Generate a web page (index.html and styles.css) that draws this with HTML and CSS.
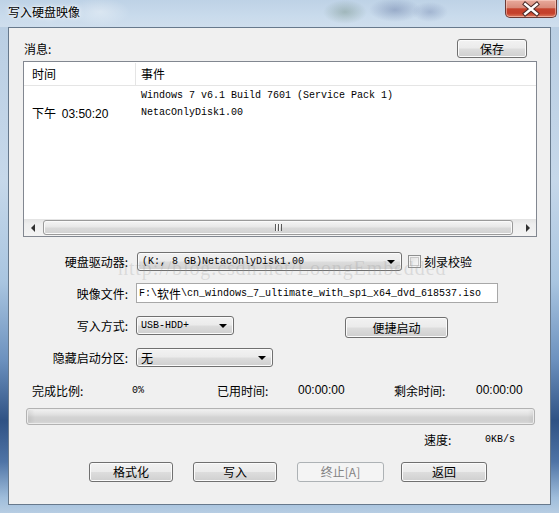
FILE: index.html
```html
<!DOCTYPE html>
<html>
<head>
<meta charset="UTF-8">
<title>写入硬盘映像</title>
<link rel="stylesheet" href="styles.css">
</head>
<body>
<div class="window">
  <div class="titlebar">
    <span class="title">写入硬盘映像</span>
    <div class="close">
      <svg width="52" height="18" viewBox="0 0 52 18">
        <path d="M20 4 L32 14 M32 4 L20 14" stroke="#4a2b28" stroke-width="4.6" stroke-linecap="square" fill="none"/>
        <path d="M20 4 L32 14 M32 4 L20 14" stroke="#ffffff" stroke-width="2.6" stroke-linecap="square" fill="none"/>
      </svg>
    </div>
  </div>

  <div class="client">
    <div class="msg-head">
      <span>消息:</span>
      <div class="btn save">保存</div>
    </div>

    <div class="listview">
      <div class="lv-header">
        <div class="c1">时间</div>
        <div class="c2">事件</div>
      </div>
      <div class="lv-body">
        <div class="lv-row">
          <div class="c1"></div>
          <div class="c2 mono">Windows 7 v6.1 Build 7601 (Service Pack 1)</div>
        </div>
        <div class="lv-row">
          <div class="c1">下午 <span class="num">03:50:20</span></div>
          <div class="c2 mono">NetacOnlyDisk1.00</div>
        </div>
      </div>
      <div class="hscroll">
        <div class="arrow-btn"><span class="tri-left"></span></div>
        <div class="thumb"><span class="grip"></span></div>
        <div class="arrow-btn"><span class="tri-right"></span></div>
      </div>
    </div>

    <div class="row r1">
      <span class="lbl">硬盘驱动器:</span>
      <div class="combo drive"><span class="mono">(K:, 8 GB)NetacOnlyDisk1.00</span><span class="tri-down"></span></div>
      <span class="check"></span>
      <span class="check-text">刻录校验</span>
    </div>

    <div class="row r2">
      <span class="lbl">映像文件:</span>
      <div class="textbox mono">F:\<span class="cjk">软件</span>\cn_windows_7_ultimate_with_sp1_x64_dvd_618537.iso</div>
    </div>

    <div class="row r3">
      <span class="lbl">写入方式:</span>
      <div class="combo mode"><span class="mono">USB-HDD+</span><span class="tri-down"></span></div>
      <div class="btn quick">便捷启动</div>
    </div>

    <div class="row r4">
      <span class="lbl">隐藏启动分区:</span>
      <div class="combo hidden"><span>无</span><span class="tri-down"></span></div>
    </div>

    <div class="stats">
      <span class="st-lbl w1">完成比例:</span>
      <span class="st-val w2 mono">0%</span>
      <span class="st-lbl w3">已用时间:</span>
      <span class="st-val w4 num">00:00:00</span>
      <span class="st-lbl w5">剩余时间:</span>
      <span class="st-val num">00:00:00</span>
    </div>

    <div class="progress"></div>

    <div class="speed">
      <span class="sp-lbl">速度:</span>
      <span class="mono">0KB/s</span>
    </div>

    <div class="buttons">
      <div class="btn b1">格式化</div>
      <div class="btn b2">写入</div>
      <div class="btn b3 disabled">终止[A]</div>
      <div class="btn b4">返回</div>
    </div>
  </div>

  <div class="watermark">http://blog.csdn.net/LoongEmbedded</div>
</div>
</body>
</html>
```

FILE: styles.css
```css
body {
  margin: 0;
  font-family: "Noto Sans CJK SC", "Liberation Sans", sans-serif;
  font-size: 12px;
  color: #000;
}

.window {
  position: relative;
  width: 559px;
  height: 513px;
  display: flex;
  flex-direction: column;
  overflow: hidden;
  background:
    linear-gradient(to bottom, #b8cde2 0%, #c6d8ea 35%, #a9c5e0 55%, #6d92bf 70%, #2f5284 82%, #4f74a6 90%, #9fbddb 97%, #b7cde3 100%);
}

/* title bar */
.titlebar {
  height: 27px;
  display: flex;
  justify-content: space-between;
  align-items: flex-start;
  background:
    radial-gradient(ellipse 22px 12px at 345px 12px, rgba(90,120,100,0.35), rgba(90,120,100,0)),
    radial-gradient(ellipse 26px 12px at 395px 10px, rgba(70,90,140,0.35), rgba(70,90,140,0)),
    radial-gradient(ellipse 18px 10px at 430px 12px, rgba(80,100,150,0.3), rgba(80,100,150,0)),
    radial-gradient(ellipse 30px 14px at 100px 12px, rgba(255,255,255,0.35), rgba(255,255,255,0)),
    linear-gradient(to bottom, #bed2e6 0%, #c9dbec 60%, #cfdeed 100%);
}

.title {
  padding: 5px 0 0 8px;
  font-size: 12px;
  line-height: 14px;
  text-shadow: 0 0 6px #fff, 0 0 3px #fff;
}

.close {
  width: 52px;
  height: 18px;
  margin-right: 2px;
  box-sizing: border-box;
  border: 1px solid #6b3a35;
  border-top: none;
  border-radius: 0 0 5px 5px;
  background: linear-gradient(to bottom, #e8aa9c 0%, #d98b7a 45%, #c5432d 52%, #c4402b 78%, #de7a5e 100%);
  box-shadow: inset 0 0 0 1px rgba(255,220,210,0.5);
  display: flex;
}

/* client area */
.client {
  flex: 1;
  margin: 0 8px 8px 8px;
  background: #f0f0f0;
  border: 1px solid #67798c;
  padding: 11px 13px 0 14px;
  box-sizing: border-box;
}

.mono {
  font-family: "Liberation Mono", monospace;
  font-size: 10px;
}
.cjk {
  font-family: "Noto Sans CJK SC", sans-serif;
  font-size: 12px;
}
.num {
  font-family: "Liberation Sans", sans-serif;
  font-size: 12px;
}

.msg-head {
  height: 19px;
  display: flex;
  justify-content: space-between;
  align-items: center;
  padding: 0 10px 0 1px;
}

.btn {
  box-sizing: border-box;
  display: flex;
  align-items: center;
  justify-content: center;
  border: 1px solid #707070;
  border-radius: 3px;
  background: linear-gradient(to bottom, #f2f2f2 0%, #ebebeb 48%, #dddddd 52%, #cfcfcf 100%);
  box-shadow: inset 0 0 0 1px #fbfbfb;
  line-height: 14px;
}
.btn.disabled {
  border-color: #adb2b5;
  background: #f4f4f4;
  box-shadow: none;
  color: #838383;
}
.save {
  width: 70px;
  height: 19px;
}

/* list view */
.listview {
  margin-top: 3px;
  height: 176px;
  box-sizing: border-box;
  border: 1px solid #828790;
  background: #fff;
  display: flex;
  flex-direction: column;
}
.lv-header {
  height: 23px;
  display: flex;
  align-items: center;
  border-bottom: 1px solid #e5e5e5;
}
.lv-header .c1 {
  border-right: 1px solid #e5e5e5;
  height: 22px;
  display: flex;
  align-items: center;
}
.c1 {
  width: 112px;
  box-sizing: border-box;
  padding-left: 8px;
}
.c2 {
  padding-left: 5px;
}
.lv-body {
  flex: 1;
}
.lv-row {
  height: 17px;
  display: flex;
  align-items: center;
}
.lv-body .lv-row:first-child {
  margin-top: 1px;
}
.lv-row .c1 .num {
  margin-left: 3px;
}

.hscroll {
  height: 17px;
  display: flex;
  background: linear-gradient(to bottom, #e3e3e3 0%, #eeeeee 30%, #f3f3f3 100%);
}
.arrow-btn {
  width: 17px;
  display: flex;
  align-items: center;
  justify-content: center;
}
.tri-left {
  border-top: 4px solid transparent;
  border-bottom: 4px solid transparent;
  border-right: 4px solid #303030;
}
.tri-right {
  border-top: 4px solid transparent;
  border-bottom: 4px solid transparent;
  border-left: 4px solid #303030;
}
.thumb {
  flex: 1;
  margin: 1px 6px 1px 2px;
  box-sizing: border-box;
  border: 1px solid #9a9a9a;
  border-radius: 3px;
  background: linear-gradient(to bottom, #f5f5f5 0%, #e8e8e8 45%, #d9d9d9 55%, #d2d2d2 100%);
  box-shadow: inset 0 0 0 1px #fafafa;
  display: flex;
  align-items: center;
  justify-content: center;
}
.grip {
  width: 7px;
  height: 7px;
  background: repeating-linear-gradient(to right, #5a5a5a 0, #5a5a5a 1px, #f8f8f8 1px, #f8f8f8 2px, transparent 2px, transparent 3px);
}

/* form rows */
.row {
  display: flex;
  align-items: center;
}
.lbl {
  width: 105px;
  margin-right: 8px;
  text-align: right;
  white-space: nowrap;
}
.r1 {
  margin-top: 15px;
  height: 19px;
}
.r2 {
  margin-top: 12px;
  height: 20px;
}
.r3 {
  margin-top: 13px;
  height: 22px;
  align-items: flex-start;
}
.r3 .lbl {
  line-height: 19px;
}
.r4 {
  margin-top: 10px;
  height: 19px;
}

.combo {
  box-sizing: border-box;
  height: 19px;
  display: flex;
  align-items: center;
  justify-content: space-between;
  padding: 0 6px 0 4px;
  border: 1px solid #707070;
  border-radius: 3px;
  background: linear-gradient(to bottom, #f2f2f2 0%, #ebebeb 48%, #dddddd 52%, #cfcfcf 100%);
  box-shadow: inset 0 0 0 1px #fbfbfb;
}
.tri-down {
  border-left: 4px solid transparent;
  border-right: 4px solid transparent;
  border-top: 4px solid #000;
}
.drive {
  width: 265px;
  margin-left: 1px;
}
.mode {
  width: 98px;
}
.hidden {
  width: 137px;
}

.check {
  width: 13px;
  height: 13px;
  box-sizing: border-box;
  margin-left: 6px;
  border: 1px solid #8e8f8f;
  background: linear-gradient(135deg, #dcdcdc 0%, #f0f0f0 60%, #fbfbfb 100%);
  box-shadow: inset 0 0 0 1px #f4f4f4, inset 0 0 0 2px #c8c8c8;
}
.check-text {
  margin-left: 3px;
}

.textbox {
  width: 362px;
  height: 20px;
  box-sizing: border-box;
  border: 1px solid #a8a8a8;
  background: #fff;
  padding-left: 2px;
  display: flex;
  align-items: center;
  white-space: nowrap;
  overflow: hidden;
}

.quick {
  width: 103px;
  height: 21px;
  margin: 1px 0 0 111px;
}

/* status */
.stats {
  margin-top: 16px;
  height: 14px;
  display: flex;
  align-items: center;
  padding-left: 9px;
  white-space: nowrap;
}
.w1 { width: 100px; }
.w2 { width: 85px; }
.w3 { width: 81px; }
.w4 { width: 96px; }
.w5 { width: 82px; }

.progress {
  margin: 11px 0 0 3px;
  width: 509px;
  height: 17px;
  box-sizing: border-box;
  border: 1px solid #b2b2b2;
  border-radius: 3px;
  background:
    linear-gradient(to right, rgba(0,0,0,0.08) 0, rgba(0,0,0,0) 8px, rgba(0,0,0,0) 501px, rgba(0,0,0,0.06) 100%),
    linear-gradient(to bottom, #f2f2f2 0%, #e2e2e2 35%, #d3d3d3 55%, #d0d0d0 80%, #dadada 100%);
  box-shadow: inset 0 0 0 1px #ececec;
}

.speed {
  margin-top: 7px;
  height: 14px;
  display: flex;
  align-items: center;
  padding-left: 401px;
}
.sp-lbl {
  width: 61px;
}

.buttons {
  margin-top: 16px;
  height: 20px;
  display: flex;
  padding-left: 66px;
}
.buttons .btn {
  height: 20px;
}
.b1 { width: 84px; }
.b2 { width: 84px; margin-left: 20px; }
.b3 { width: 87px; margin-left: 20px; }
.b4 { width: 86px; margin-left: 17px; }

.watermark {
  position: absolute;
  left: 118px;
  top: 257px;
  font-family: "Liberation Serif", serif;
  font-size: 20px;
  letter-spacing: 0.9px;
  color: rgba(150, 150, 150, 0.25);
  white-space: nowrap;
  pointer-events: none;
}
```
